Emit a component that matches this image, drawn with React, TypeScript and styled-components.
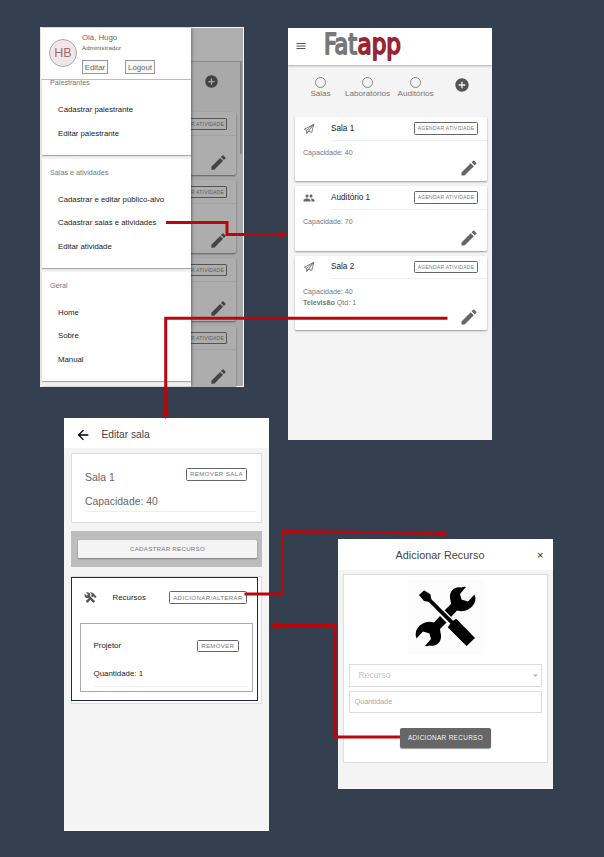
import React from 'react';
import styled, { createGlobalStyle } from 'styled-components';
import { MdAddCircle, MdArrowBack, MdEdit, MdGroup, MdMenu, MdArrowDropDown } from 'react-icons/md';
import { IoMdConstruct } from 'react-icons/io';

const GlobalStyle = createGlobalStyle`
  * { box-sizing: border-box; }
  body { margin: 0; background: #343f50; font-family: "Liberation Sans", Arial, sans-serif; }
  svg { display: block; flex: none; }
`;

const Canvas = styled.main`
  position: relative;
  width: 604px;
  height: 857px;
  overflow: hidden;
  background: #343f50;
`;

const Screen = styled.section<{ $x: number; $y: number; $w: number; $h: number }>`
  position: absolute;
  left: ${p => p.$x}px;
  top: ${p => p.$y}px;
  width: ${p => p.$w}px;
  height: ${p => p.$h}px;
  background: #f4f4f4;
  overflow: hidden;
  isolation: isolate;
`;

const Label = styled.span<{ $size: number; $color?: string; $track?: number }>`
  display: block;
  font-size: ${p => p.$size}px;
  line-height: 12px;
  letter-spacing: ${p => p.$track ?? 0}px;
  color: ${p => p.$color ?? '#222'};
  white-space: nowrap;
`;

const OutlineButton = styled.button<{ $w: number; $size: number; $track?: number }>`
  flex: none;
  width: ${p => p.$w}px;
  height: 12.5px;
  padding: 0;
  border: 1px solid #666;
  border-radius: 1.5px;
  background: transparent;
  color: #777;
  font-family: inherit;
  font-size: ${p => p.$size}px;
  line-height: 10px;
  letter-spacing: ${p => p.$track ?? 0.5}px;
  white-space: nowrap;
`;

/* Side menu */

const MenuFrame = styled.div`
  display: flex;
  height: 100%;
  border: 1px solid #f4f4f4;
`;

const Drawer = styled.nav`
  width: 150px;
  flex: none;
  background: #f1f1f1;
  box-shadow: 1px 0 3px rgba(0, 0, 0, 0.35);
  z-index: 1;
`;

const Profile = styled.header`
  display: flex;
  gap: 5px;
  height: 52px;
  padding: 4px 0 0 8px;
  background: #fff;
  border-bottom: 1px solid #bdbdbd;
`;

const Avatar = styled.div`
  display: grid;
  place-items: center;
  width: 28px;
  height: 28px;
  margin-top: 6.5px;
  border: 1px solid #aaa;
  border-radius: 50%;
  background: #f3e6e8;
  color: #a06a6e;
  font-size: 12.5px;
`;

const ProfileInfo = styled.div`
  display: flex;
  flex-direction: column;
`;

const ProfileRole = styled(Label)`
  margin-top: -2px;
`;

const ProfileActions = styled.div`
  display: flex;
  gap: 17px;
  margin-top: 6px;
`;

const ProfileButton = styled.button<{ $w: number }>`
  width: ${p => p.$w}px;
  height: 14px;
  padding: 0;
  border: 1px solid #999;
  background: #f8f8f8;
  color: #666;
  font: 7.8px/11px "Liberation Sans", Arial, sans-serif;
`;

const MenuSection = styled.section<{ $h: number; $top: number }>`
  height: ${p => p.$h}px;
  margin: 0 0 4px 1px;
  padding: ${p => p.$top}px 0 0 8px;
  background: #fff;
  box-shadow: 0 1px 1px rgba(0, 0, 0, 0.3);
`;

const MenuTitle = styled.h2`
  margin: 0;
  height: 26px;
  font-size: 7.2px;
  line-height: 10px;
  font-weight: 400;
  color: #777;
`;

const FirstTitle = styled(MenuTitle)`
  height: 24px;
  line-height: 5px;
`;

const MenuItem = styled.a`
  display: block;
  height: 23.5px;
  padding-left: 8px;
  font-size: 7.8px;
  line-height: 12px;
  color: #222;
  white-space: nowrap;
`;

const Backdrop = styled.div`
  display: flex;
  flex: 1;
  flex-direction: column;
  min-width: 0;
  background: #a9a9a9;
`;

const BackdropBar = styled.div`
  flex: none;
  height: 34px;
  background: #aeaeae;
  border-bottom: 1px solid #8b8b8b;
`;

const BackdropBody = styled.div`
  display: flex;
  flex: 1;
  justify-content: space-between;
  min-height: 0;
`;

const BackdropList = styled.div`
  width: 45px;
  color: #444;
`;

const BackdropAdd = styled.div`
  height: 50px;
  padding: 12px 0 0 12.5px;
`;

const BackdropCard = styled.div<{ $h: number }>`
  display: flex;
  flex-direction: column;
  justify-content: space-between;
  height: ${p => p.$h}px;
  margin-bottom: 4.5px;
  background: #adadad;
  border-radius: 0 2px 2px 0;
  box-shadow: 0 1px 2px rgba(0, 0, 0, 0.45);
`;

const BackdropCardHead = styled.div`
  display: flex;
  height: 24px;
  padding-top: 6px;
  border-bottom: 1px solid #a2a2a2;
`;

const ClippedButton = styled.div`
  width: 36px;
  height: 12px;
  border: 1px solid #555;
  border-left: 0;
  border-radius: 0 1.5px 1.5px 0;
  color: #5c5c5c;
  font-size: 5px;
  line-height: 10.5px;
  letter-spacing: 0.2px;
  white-space: nowrap;
`;

const ClippedPencil = styled.div`
  padding: 0 0 3px 17.5px;
`;

const Scrollbar = styled.div`
  width: 2px;
  height: 92px;
  margin-right: 1px;
  background: #858585;
`;

/* Room list */

const AppBar = styled.header`
  display: flex;
  align-items: center;
  height: 36.5px;
  padding-left: 7px;
  gap: 17px;
  background: #fff;
  box-shadow: 0 1px 2px rgba(0, 0, 0, 0.3);
`;

const Filters = styled.div`
  display: grid;
  grid-template-columns: 46px 48px 48px 44px;
  height: 52.5px;
  padding: 12px 0 0 9.5px;
`;

const Filter = styled.label`
  display: flex;
  flex-direction: column;
  align-items: center;
`;

const Radio = styled.i`
  width: 11px;
  height: 11px;
  border: 1px solid #888;
  border-radius: 50%;
`;

const AddSlot = styled.div`
  justify-self: center;
  color: #555;
`;

const RoomCard = styled.article<{ $h: number }>`
  height: ${p => p.$h}px;
  margin: 0 5px 5px 7px;
  display: flex;
  flex-direction: column;
  background: #fff;
  border-radius: 1.5px;
  box-shadow: 0 1px 2px rgba(0, 0, 0, 0.38);
`;

const RoomHead = styled.div`
  display: flex;
  align-items: center;
  height: 23.5px;
  padding-left: 8px;
  color: #666;
`;

const RoomTitle = styled.div`
  display: flex;
  flex: 1;
  align-items: center;
  justify-content: space-between;
  height: 100%;
  margin-left: 16px;
  padding-right: 9px;
  border-bottom: 1px solid #eee;
`;

const RoomName = styled(Label)`
  padding-top: 1px;
`;

const RoomBody = styled.div`
  display: flex;
  flex: 1;
  justify-content: space-between;
  align-items: flex-end;
  padding: 7.5px 8.5px 3px 8px;
  color: #666;
`;

const RoomDetails = styled.div`
  display: flex;
  flex-direction: column;
  align-self: flex-start;
  font-size: 7.1px;
  line-height: 11px;
  color: #777;
`;

/* Room editor */

const EditBar = styled.header`
  display: flex;
  align-items: center;
  gap: 10.5px;
  height: 30px;
  padding: 3px 0 0 11px;
  background: #fff;
`;

const InfoCard = styled.div`
  height: 70px;
  margin: 4.5px 7px 8.5px;
  padding: 14.5px 5px 0 13px;
  background: #fff;
  border: 1px solid #ddd;
`;

const InfoRow = styled.div`
  display: flex;
  justify-content: space-between;
  height: 25px;
  padding-right: 9px;
`;

const InfoName = styled(Label)`
  margin-top: 3px;
`;

const InfoLine = styled.div`
  height: 19px;
  padding-top: 3px;
  border-bottom: 1px solid #eee;
`;

const ActionBand = styled.div`
  height: 36px;
  margin: 0 7px 9px;
  padding: 9px 5px 9px 7px;
  background: #bdbdbd;
`;

const WideButton = styled.button`
  display: block;
  width: 100%;
  height: 18px;
  padding: 0;
  border: 0;
  border-radius: 1.5px;
  background: #f4f4f4;
  color: #777;
  box-shadow: 0 1px 2px rgba(0, 0, 0, 0.35);
  font: 6.2px/18px "Liberation Sans", Arial, sans-serif;
  letter-spacing: 0.25px;
`;

const ResourceShell = styled.div`
  height: 128px;
  margin: 0 7px;
  padding-right: 3px;
  background: #fafafa;
  border: 1px solid #ddd;
`;

const ResourceCard = styled.div`
  height: 124px;
  margin-left: -1px;
  padding: 12.5px 4px 0 8px;
  background: #fff;
  border: 1px solid #1f2b42;
`;

const ResourceHead = styled.div`
  display: flex;
  align-items: center;
  height: 14px;
  padding: 0 6px 0 4px;
  color: #555;
`;

const ResourceName = styled.div`
  flex: 1;
  padding-left: 15.5px;
`;

const ResourceBox = styled.div`
  height: 69px;
  margin-top: 18.5px;
  padding: 15.5px 4px 0 12.5px;
  border: 1px solid #aaa;
`;

const ResourceRow = styled.div`
  display: flex;
  justify-content: space-between;
  height: 28.5px;
  padding-right: 9px;
`;

const ResourceLine = styled.div`
  height: 18.5px;
  border-bottom: 1px solid #eee;
`;

/* Add-resource dialog */

const DialogBar = styled.header`
  display: grid;
  grid-template-columns: 204px 1fr;
  align-items: center;
  height: 31px;
  text-align: center;
  background: #fff;
`;

const CloseMark = styled(Label)`
  margin-left: -5px;
  text-align: left;
`;

const DialogPanel = styled.div`
  display: flex;
  flex-direction: column;
  height: 189px;
  margin: 3.5px 5px 0;
  padding: 5px 5px 0;
  background: #fff;
  border: 1px solid #ddd;
`;

const Picture = styled.div`
  display: grid;
  place-items: center;
  align-self: center;
  width: 76px;
  height: 75px;
  background: #fcfcfc;
`;

const Field = styled.div<{ $h: number; $pad: number; $gap: number }>`
  display: flex;
  align-items: center;
  justify-content: space-between;
  height: ${p => p.$h}px;
  margin-top: ${p => p.$gap}px;
  padding: 0 0 0 ${p => p.$pad}px;
  border: 1px solid #ddd;
`;

const SubmitButton = styled.button`
  align-self: center;
  width: 91px;
  height: 19.5px;
  margin-top: 15.5px;
  padding: 0;
  border: 0;
  border-radius: 2px;
  background: #666;
  color: #f4f4f4;
  box-shadow: 0 1px 1px rgba(0, 0, 0, 0.4);
  font: 6.4px/20px "Liberation Sans", Arial, sans-serif;
  letter-spacing: 0.34px;
`;

const Connectors = styled.svg`
  position: absolute;
  inset: 0;
  z-index: 2;
  pointer-events: none;
`;

const Logo = () => (
  <svg width="84" height="36" viewBox="0 0 84 36" fontFamily='"DejaVu Sans Condensed", "DejaVu Sans", sans-serif' fontSize="29" strokeWidth="1.8" strokeLinejoin="round">
    <text x="0" y="25.5" textLength="33" lengthAdjust="spacingAndGlyphs" fill="#777" stroke="#777">Fat</text>
    <text x="33.5" y="25.5" textLength="43.5" lengthAdjust="spacingAndGlyphs" fill="#9b2335" stroke="#9b2335">app</text>
  </svg>
);

const PaperPlane = () => (
  <svg width="12" height="12" viewBox="0 0 12 12" fill="none" stroke="#666" strokeWidth="0.8" strokeLinejoin="round">
    <path d="M1.3 6.2 L10.8 1.3 L8.7 9.7 L5.6 8 L3.7 10.5 L3.6 7.2Z" />
    <path d="M3.6 7.2 L10.8 1.3 L5.6 8 M3.7 10.5 L5.6 8" />
  </svg>
);

const Wrench = () => (
  <path d="M46.5 1.5 C39 -0.5 33 6 35.5 14.5 L36 18 L29.5 24.5 L36 31 L42 24.5 C50 27 58 22 60 15.5 Q61 12 59.5 8.5 L53 15.5 L46.5 13.5 L45 8 L51 1 Q49 0.5 46.5 1.5Z" />
);

const ToolsDrawing = () => (
  <svg width="62" height="62" viewBox="0 0 62 62">
    <Wrench />
    <g transform="rotate(180 30.5 30.5)"><Wrench /></g>
    <path d="M3 9 L9 3.5 L16 8 L17 13 L38 34 L41.5 32 L61 52 L51.5 61 L32 41.5 L34.5 37.5 L13.5 16.5 L8.5 15.5Z" stroke="#fff" strokeWidth="1.3" />
  </svg>
);

const MENU = [
  { title: 'Palestrantes', h: 75, top: 0, items: ['Cadastrar palestrante', 'Editar palestrante'] },
  { title: 'Salas e atividades', h: 109, top: 8.5, items: ['Cadastrar e editar público-alvo', 'Cadastrar salas e atividades', 'Editar atividade'] },
  { title: 'Geral', h: 109, top: 8.5, items: ['Home', 'Sobre', 'Manual'] },
];

const MenuScreen = () => (
  <Screen $x={40} $y={27} $w={204} $h={360}>
    <MenuFrame>
      <Drawer>
        <Profile>
          <Avatar>HB</Avatar>
          <ProfileInfo>
            <Label $size={7.8} $color="#666">Olá, Hugo</Label>
            <ProfileRole $size={6.1} $color="#555" $track={0.12}>Administrador</ProfileRole>
            <ProfileActions>
              <ProfileButton $w={26}>Editar</ProfileButton>
              <ProfileButton $w={30}>Logout</ProfileButton>
            </ProfileActions>
          </ProfileInfo>
        </Profile>
        {MENU.map((s, i) => (
          <MenuSection key={s.title} $h={s.h} $top={s.top}>
            {i === 0 ? <FirstTitle>{s.title}</FirstTitle> : <MenuTitle>{s.title}</MenuTitle>}
            {s.items.map(t => <MenuItem key={t}>{t}</MenuItem>)}
          </MenuSection>
        ))}
      </Drawer>
      <Backdrop>
        <BackdropBar />
        <BackdropBody>
          <BackdropList>
            <BackdropAdd><MdAddCircle size={15} /></BackdropAdd>
            {[63, 73.5, 63.5, 63.5].map((h, i) => (
              <BackdropCard key={i} $h={h}>
                <BackdropCardHead><ClippedButton>R ATIVIDADE</ClippedButton></BackdropCardHead>
                <ClippedPencil><MdEdit size={19} /></ClippedPencil>
              </BackdropCard>
            ))}
          </BackdropList>
          <Scrollbar />
        </BackdropBody>
      </Backdrop>
    </MenuFrame>
  </Screen>
);

const ROOMS = [
  { name: 'Sala 1', capacity: 40, h: 64, group: false },
  { name: 'Auditório 1', capacity: 70, h: 64.5, group: true },
  { name: 'Sala 2', capacity: 40, h: 74.5, group: false, extra: true },
];

const RoomsScreen = () => (
  <Screen $x={288} $y={28} $w={204} $h={412}>
    <AppBar>
      <MdMenu size={12} color="#555" />
      <Logo />
    </AppBar>
    <Filters>
      {['Salas', 'Laboratórios', 'Auditórios'].map(f => (
        <Filter key={f}><Radio /><Label $size={8.1} $color="#777">{f}</Label></Filter>
      ))}
      <AddSlot><MdAddCircle size={16} /></AddSlot>
    </Filters>
    {ROOMS.map(r => (
      <RoomCard key={r.name} $h={r.h}>
        <RoomHead>
          {r.group ? <MdGroup size={12} /> : <PaperPlane />}
          <RoomTitle>
            <RoomName $size={8.2}>{r.name}</RoomName>
            <OutlineButton $w={64} $size={5} $track={0.28}>AGENDAR ATIVIDADE</OutlineButton>
          </RoomTitle>
        </RoomHead>
        <RoomBody>
          <RoomDetails>
            <span>Capacidade: {r.capacity}</span>
            {r.extra && <span><b>Televisão</b> Qtd: 1</span>}
          </RoomDetails>
          <MdEdit size={20} />
        </RoomBody>
      </RoomCard>
    ))}
  </Screen>
);

const EditScreen = () => (
  <Screen $x={64} $y={418} $w={205} $h={413}>
    <EditBar>
      <MdArrowBack size={16} color="#000" />
      <Label $size={10.2} $color="#444">Editar sala</Label>
    </EditBar>
    <InfoCard>
      <InfoRow>
        <InfoName $size={10.5} $color="#666">Sala 1</InfoName>
        <OutlineButton $w={61} $size={6.1} $track={0.4}>REMOVER SALA</OutlineButton>
      </InfoRow>
      <InfoLine><Label $size={10.4} $color="#666">Capacidade: 40</Label></InfoLine>
    </InfoCard>
    <ActionBand><WideButton>CADASTRAR RECURSO</WideButton></ActionBand>
    <ResourceShell>
      <ResourceCard>
        <ResourceHead>
          <IoMdConstruct size={13} />
          <ResourceName><Label $size={7.9}>Recursos</Label></ResourceName>
          <OutlineButton $w={78} $size={6.1} $track={0.38}>ADICIONAR/ALTERAR</OutlineButton>
        </ResourceHead>
        <ResourceBox>
          <ResourceRow>
            <Label $size={7.9}>Projetor</Label>
            <OutlineButton $w={42.5} $size={6.1} $track={0.3}>REMOVER</OutlineButton>
          </ResourceRow>
          <ResourceLine><Label $size={7.9}>Quantidade: 1</Label></ResourceLine>
        </ResourceBox>
      </ResourceCard>
    </ResourceShell>
  </Screen>
);

const AddScreen = () => (
  <Screen $x={338} $y={539} $w={215} $h={250}>
    <DialogBar>
      <Label $size={10.8} $color="#444" $track={0.04}>Adicionar Recurso</Label>
      <CloseMark $size={11} $color="#222">×</CloseMark>
    </DialogBar>
    <DialogPanel>
      <Picture><ToolsDrawing /></Picture>
      <Field $h={23} $pad={8.5} $gap={9}>
        <Label $size={8.6} $color="#c2c2c2">Recurso</Label>
        <MdArrowDropDown size={11} color="#aaa" />
      </Field>
      <Field $h={21.5} $pad={4.5} $gap={4.5}>
        <Label $size={7.3} $color="#aaa">Quantidade</Label>
      </Field>
      <SubmitButton>ADICIONAR RECURSO</SubmitButton>
    </DialogPanel>
  </Screen>
);

const App = () => (
  <>
    <GlobalStyle />
    <Canvas>
      <MenuScreen />
      <RoomsScreen />
      <EditScreen />
      <AddScreen />
      <Connectors width="604" height="857" viewBox="0 0 604 857">
        <g fill="none" stroke="#b9070c" strokeWidth="3">
          <path d="M166 222.5H227V234.5H280" />
          <path d="M447.5 318.3H165.7V413" />
          <path d="M244.5 594H282.5V531.5L443 533.3" />
          <path d="M400 737H335V625.5H277" />
        </g>
        <g fill="#b9070c">
          <path d="M279 230.5L287 234.5L279 238.5Z" />
          <path d="M161.5 411H170L165.7 419Z" />
          <path d="M438 533.5L446 529.8V538Z" />
          <path d="M278 621.2V629.8L269.5 625.5Z" />
        </g>
      </Connectors>
    </Canvas>
  </>
);

export default App;
